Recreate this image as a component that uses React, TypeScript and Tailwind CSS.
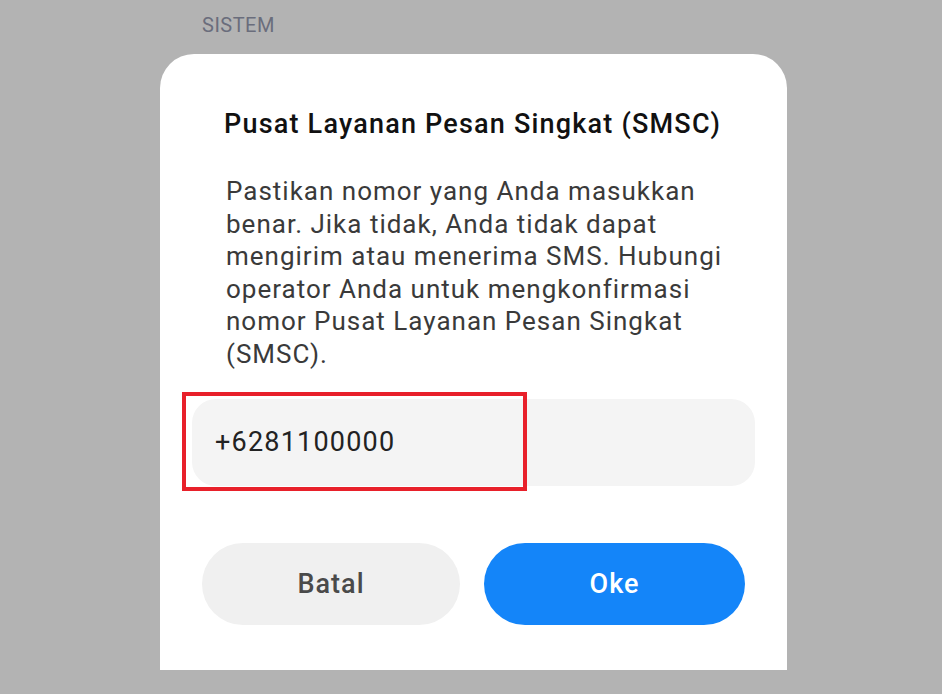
const bodyLines = [
  'Pastikan nomor yang Anda masukkan',
  'benar. Jika tidak, Anda tidak dapat',
  'mengirim atau menerima SMS. Hubungi',
  'operator Anda untuk mengkonfirmasi',
  'nomor Pusat Layanan Pesan Singkat',
  '(SMSC).',
];

export default function App() {
  return (
    <div
      className="w-[942px] h-[694px] overflow-hidden bg-[#b3b3b3] flex flex-col"
      style={{ fontFamily: 'Roboto, "Noto Sans", sans-serif' }}
    >
      {/* Section label behind the dim */}
      <div className="pl-[202px] pt-[12px] h-[54px] text-[20px] leading-[26px] tracking-[0.5px] text-[#6a6d7c]">
        SISTEM
      </div>

      {/* Dialog sheet */}
      <div className="ml-[160px] w-[627px] h-[616px] bg-white rounded-t-[34px] flex flex-col">
        <h2 className="pl-[64px] pt-[54px] text-[27px] leading-[32px] tracking-[1.2px] font-medium text-[#111]">
          Pusat Layanan Pesan Singkat (SMSC)
        </h2>

        <div className="pl-[66px] mt-[35px] text-[26px] leading-[32.5px] tracking-[1px] text-[#3a3a3a]">
          {bodyLines.map((line, i) => (
            <p key={i} className="whitespace-nowrap">
              {line}
            </p>
          ))}
        </div>

        {/* Input */}
        <div className="relative mx-[32px] mt-[29px] h-[87px] rounded-[24px] bg-[#f4f4f4] flex items-center px-[23px]">
          <span className="text-[27px] tracking-[1.2px] text-[#222]">+6281100000</span>
          {/* Red highlight box */}
          <div className="absolute left-[-10px] top-[-7px] w-[345px] h-[99px] border-[4px] border-[#e8202a]" />
        </div>

        {/* Buttons */}
        <div className="flex gap-[24px] mx-[42px] mt-[57px]">
          <button className="w-[258px] h-[82px] rounded-full bg-[#f0f0f0] text-[27px] tracking-[1px] font-medium text-[#4a4a4a]">
            Batal
          </button>
          <button className="w-[261px] h-[82px] rounded-full bg-[#1485f9] text-[27px] tracking-[1px] font-medium text-white">
            Oke
          </button>
        </div>
      </div>
    </div>
  );
}
